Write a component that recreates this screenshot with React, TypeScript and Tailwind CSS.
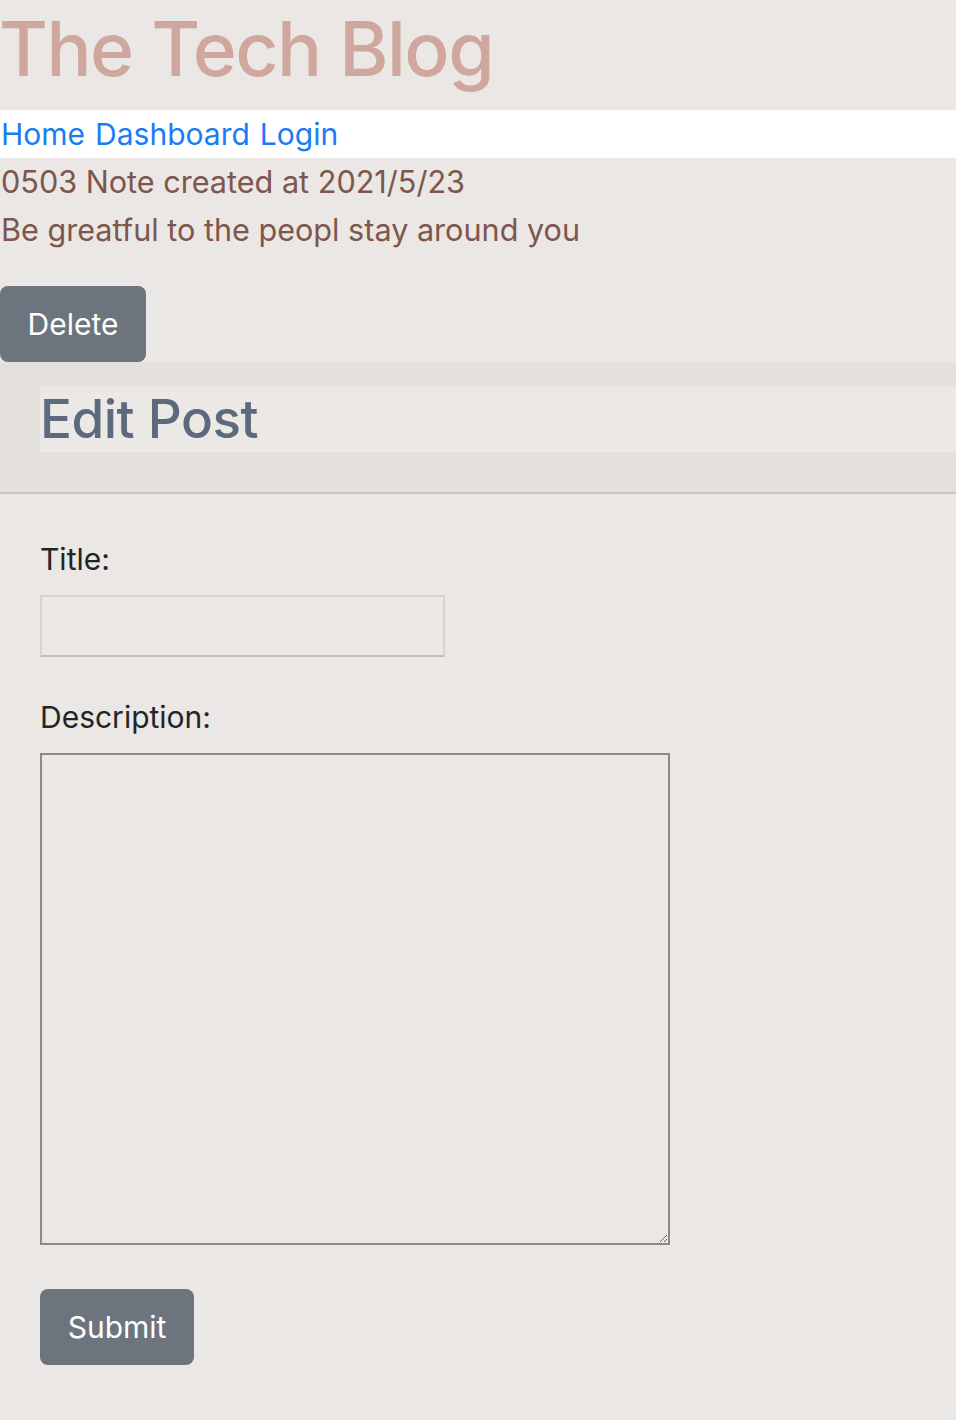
import React from "react";

export default function App() {
  return (
    <div className="min-h-[1420px] bg-[#ebe7e4] font-['Inter','Noto_Sans',sans-serif]">
      <header className="h-[110px] pt-[4px]">
        <h1 className="text-[75px] leading-[90px] font-medium text-[#cfa79e] tracking-[-1.5px] -ml-[1px]">
          The Tech Blog
        </h1>
      </header>
      <nav className="h-[48px] bg-white flex items-center gap-[10px] text-[30px] leading-[48px] text-[#1a7cf5] pl-[1px]">
        <a>Home</a>
        <a>Dashboard</a>
        <a>Login</a>
      </nav>
      <div className="text-[#7d564d] text-[30.6px] leading-[48px] pl-[1px]">
        <p>0503 Note created at 2021/5/23</p>
        <p>Be greatful to the peopl stay around you</p>
      </div>
      <div className="mt-[32px] h-[76px]">
        <button className="h-[76px] w-[146px] rounded-[8px] bg-[#6c757d] text-white text-[30px]">
          Delete
        </button>
      </div>
      <section className="h-[132px] bg-[#e4e0dd] border-b-2 border-[#c9c5c2] pt-[24px] pl-[40px]">
        <h3 className="h-[66px] bg-[#ece8e5] text-[#5c6a7d] text-[53px] leading-[66px] font-medium tracking-[-0.5px]">
          Edit Post
        </h3>
      </section>
      <form className="px-[40px] pt-[43px]">
        <label className="block text-[#212529] text-[30px] leading-[44px]">Title:</label>
        <input className="mt-[14px] block w-[405px] h-[62px] border-2 border-[#d6d2cf] border-b-[#c0bcb9] bg-[#ebe7e4]" />
        <label className="block mt-[38px] text-[#212529] text-[30px] leading-[44px]">Description:</label>
        <textarea className="mt-[14px] block w-[630px] h-[492px] border-2 border-[#8a8a8a] bg-[#ebe7e4]" />
        <button
          type="button"
          className="mt-[44px] h-[76px] w-[154px] rounded-[8px] bg-[#6c757d] text-white text-[30px]"
        >
          Submit
        </button>
      </form>
    </div>
  );
}
